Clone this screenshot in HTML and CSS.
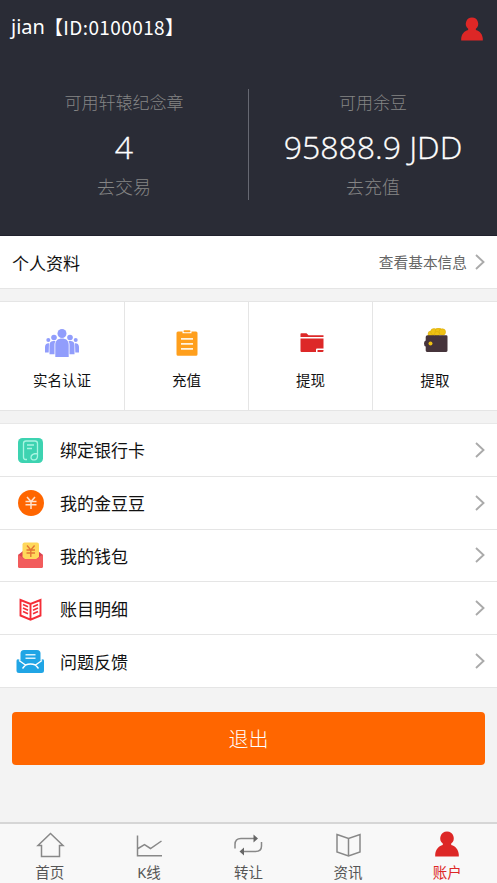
FILE: index.html
```html
<!DOCTYPE html>
<html lang="zh-CN">
<head>
<meta charset="utf-8">
<meta name="viewport" content="width=device-width, initial-scale=1">
<title>账户</title>
<link rel="stylesheet" href="styles.css">
</head>
<body>
<svg class="defs" aria-hidden="true">
  <symbol id="person" viewBox="0 0 24 26"><path d="M12 0.500a6.800 6.800 0 0 1 4.200 12.100v1.400c4.500 1.200 7.300 4.800 7.600 9.600v1.900H.2v-1.900c.3-4.800 3.100-8.400 7.600-9.600v-1.400A6.800 6.800 0 0 1 12 .5z" fill="#dd2726"/></symbol>
  <symbol id="chevron" viewBox="0 0 10 16"><path d="M1 1l7.500 7L1 15" fill="none" stroke="#aaa" stroke-width="1.900"/></symbol>
</svg>
<header class="hero">
  <div class="topbar">
    <h1 class="user"><span>jian</span><span class="user-id">【ID:0100018】</span></h1>
    <svg class="avatar"><use href="#person"/></svg>
  </div>
  <div class="balances">
    <div class="balance"><span class="caption">可用轩辕纪念章</span><strong>4</strong><a>去交易</a></div>
    <div class="balance"><span class="caption">可用余豆</span><strong>95888.9 JDD</strong><a>去充值</a></div>
  </div>
</header>
<main>
  <section class="profile"><span>个人资料</span><span class="more">查看基本信息</span><svg class="chevron"><use href="#chevron"/></svg></section>
  <section class="actions">
    <div class="action">
      <svg viewBox="0 0 36 30"><g fill="#919dfc"><circle cx="18" cy="5.500" r="4.500"/><circle cx="10" cy="9.500" r="2.800"/><circle cx="26" cy="9.500" r="2.800"/><circle cx="4.300" cy="12" r="2"/><circle cx="31.700" cy="12" r="2"/><path d="M11.300 29V17c0-4.500 2.700-6.500 6.700-6.500s6.700 2 6.700 6.500v12zM10.500 26.200H5.500V17c0-3 2-4.500 6-3.800-.8 1.200-1 2.400-1 4zM25.500 26.200h5V17c0-3-2-4.500-6-3.800.8 1.200 1 2.400 1 4zM4.700 24.500H1V19c0-2.500 1.500-4 4-3.800zM31.300 24.500H35V19c0-2.500-1.500-4-4-3.800z"/></g></svg>
      <span>实名认证</span>
    </div>
    <div class="action">
      <svg viewBox="0 0 36 30"><path d="M9 3.500h4.500v1.800h9V3.500H27a1.500 1.500 0 0 1 1.500 1.500v21.200a1.500 1.500 0 0 1-1.500 1.500H9a1.500 1.500 0 0 1-1.500-1.500V5A1.500 1.500 0 0 1 9 3.500z" fill="#ff9f1c"/><rect x="14.500" y="2.300" width="7" height="2" rx="1" fill="#ff9f1c"/><path d="M12 10.900h12M12 15.900h12M12 20.900h12" stroke="#fff3df" stroke-width="1.800"/></svg>
      <span>充值</span>
    </div>
    <div class="action">
      <svg viewBox="0 0 36 30"><path d="M7.500 9V6q0-.8.800-.8h5.200L15.500 7.200h15V9zM7.500 10.500h23v9.900H24q-1 0-1 1v2.500H8.500q-1 0-1-1zM24.500 22h6v.9q0 1-1 1h-5z" fill="#dd2828"/></svg>
      <span>提现</span>
    </div>
    <div class="action">
      <svg viewBox="0 0 36 30"><g fill="#efc114" stroke="#d6a905" stroke-width=".5"><circle cx="14" cy="6" r="3"/><circle cx="17" cy="3.800" r="3.300"/><circle cx="21.500" cy="3.300" r="3.300"/><circle cx="25.300" cy="4" r="3.300"/><circle cx="20" cy="6" r="2.500"/></g><path d="M10.500 7.300h18.700q1.300 0 1.300 1.300v14q0 1.300-1.300 1.300H10q-1.300 0-1.300-1.300v-4q-1.700-.5-1.700-3t1.700-3V9q0-1.700 1.800-1.700z" fill="#46343b"/><circle cx="13.500" cy="15.500" r="2" fill="#efc114"/></svg>
      <span>提取</span>
    </div>
  </section>
  <section class="menu">
    <div class="row">
      <svg class="icon" viewBox="0 0 30 30"><rect x="3" y="3" width="25" height="25" rx="4.500" fill="#3dd3b1"/><path d="M12 24.500H10.500Q8.500 24.500 8.500 22V8.500q0-2.500 2.500-2.500h9q2.500 0 2.500 2.500V21c0 5-6.500 5-6.500 1.500 0-2.500 2.500-4 6.500-4M12 10h7M12 13.500h5" fill="none" stroke="#a9f5e2" stroke-width="1.300"/></svg>
      <span>绑定银行卡</span><svg class="chevron"><use href="#chevron"/></svg>
    </div>
    <div class="row">
      <svg class="icon" viewBox="0 0 30 30"><circle cx="16" cy="15" r="13" fill="#f60"/><path d="M12 9l4 4.500L20 9M10.500 13.500h11M10.500 16.800h11M16 13.500v7.500" fill="none" stroke="#ffe2cb" stroke-width="1.500"/></svg>
      <span>我的金豆豆</span><svg class="chevron"><use href="#chevron"/></svg>
    </div>
    <div class="row">
      <svg class="icon" viewBox="0 0 30 30"><path d="M3 15l5-4h15l5 4v11q0 2-2 2H5q-2 0-2-2z" fill="#d84351"/><path d="M9.500 2.500h12.500q2 0 2 2V17l-3 3H10.500l-3-3V4.500q0-2 2-2z" fill="#ffd85b"/><path d="M12 5.500l3.800 4.500 3.800-4.500M11.500 10h8.500M11.500 13h8.500M15.800 10v7" fill="none" stroke="#e37535" stroke-width="1.400"/><path d="M3 14.500l7 4.500h11l7-4.500V26q0 2-2 2H5q-2 0-2-2z" fill="#f25c5c"/></svg>
      <span>我的钱包</span><svg class="chevron"><use href="#chevron"/></svg>
    </div>
    <div class="row">
      <svg class="icon" viewBox="0 0 30 30"><path d="M5.500 7L15.500 11l10-4v15.500l-10 4.200-10-4.200zM15.500 11v15" fill="none" stroke="#f52d37" stroke-width="1.900"/><path d="M8 11.500l5 2.200M8 15l5 2.200M8 18.500l5 2.200M23 11.500l-5 2.200M23 15l-5 2.200M23 18.500l-5 2.200" stroke="#f52d37" stroke-width="1.600"/></svg>
      <span>账目明细</span><svg class="chevron"><use href="#chevron"/></svg>
    </div>
    <div class="row">
      <svg class="icon" viewBox="0 0 30 30"><path d="M5.500 17V7.500Q5.500 4 9 4h13q3.500 0 3.500 3.500V17l-5 3.500h-10z" fill="#20a5e5"/><path d="M10.500 8.800h10M10.500 12.300h10" stroke="#d8f1fd" stroke-width="1.600"/><path d="M1.500 15q0-2.500 2.500-1.500l7 5h9l7-5q2-1 2 1.500v9.500q0 2.500-2.500 2.500H4q-2.500 0-2.500-2.500z" fill="#20a5e5"/><path d="M4 14.500l6.500 4.500q5 -2 10 0l6.500-4.500M10.500 19L7.500 22.500M20.500 19l3 3.500" fill="none" stroke="#fff" stroke-width="1.400"/></svg>
      <span>问题反馈</span><svg class="chevron"><use href="#chevron"/></svg>
    </div>
  </section>
  <button class="logout" type="button">退出</button>
</main>
<nav class="tabs">
  <a class="tab"><svg viewBox="0 0 30 28"><path d="M6.500 14.500H3L15.500 2.500 28 14.500h-3.500v11h-18z"/></svg><span>首页</span></a>
  <a class="tab"><svg viewBox="0 0 30 28"><path d="M3.500 4.500v20.300H28M4 17.500l6.500-3.800 6 3.800L27.500 10"/></svg><span>K线</span></a>
  <a class="tab"><svg viewBox="0 0 30 28"><path d="M2 17.500v-4Q2 7.500 8 7.500h15M28.500 11v4q0 5.500-6 5.500H8"/><path class="arrow" d="M20.500 3.500l4.500 4-4.500 4zM11 16.500l-4.500 4 4.500 4z"/></svg><span>转让</span></a>
  <a class="tab"><svg viewBox="0 0 30 28"><path d="M4 3.500l11.500 4L27 3.500v17.500l-11.500 4L4 21zM15.500 7.500v17.500"/></svg><span>资讯</span></a>
  <a class="tab active"><svg class="person"><use href="#person"/></svg><span>账户</span></a>
</nav>
</body>
</html>
```
FILE: styles.css
```css
* { box-sizing: border-box; }
body {
  margin: 0;
  height: 883px;
  display: flex;
  flex-direction: column;
  overflow: hidden;
  background: #f3f3f3;
  color: #111;
  font-family: "Noto Sans", "Noto Sans CJK SC", sans-serif;
  font-size: 17px;
  font-weight: 400;
}
.defs { position: absolute; width: 0; height: 0; }
main { flex: 1; }

.hero { height: 236px; background: #2a2c36; border-bottom: 1px solid #20212d; color: #fff; }
.topbar { height: 54px; padding: 0 14px 0 11px; display: flex; align-items: center; justify-content: space-between; }
.user { margin: 0; display: flex; font-size: 20px; font-weight: 400; line-height: 28px; }
.user-id { font-family: "Noto Sans CJK SC", sans-serif; font-size: 19px; letter-spacing: .4px; margin-left: -1px; }
.avatar { width: 22px; height: 24px; margin-top: 4px; }
.balances { display: flex; height: 111px; margin-top: 35px; }
.balance { width: 248px; display: flex; flex-direction: column; align-items: center; color: #858585; line-height: 26px; font-family: "Noto Sans CJK SC", sans-serif; font-weight: 300; }
.balance:first-child { width: 249px; border-right: 1px solid #666872; }
.balance strong { color: #fff; font-family: "Open Sans", "Noto Sans", sans-serif; font-size: 32px; font-weight: 300; line-height: 40px; margin: 12px 0 6px; white-space: nowrap; -webkit-text-stroke: .3px #fff; }
.balance a { font-size: 18px; }

.profile { height: 53px; padding: 0 12px 0 12px; display: flex; align-items: center; background: #fff; border-bottom: 1px solid #e5e5e5; }
.more { margin-left: auto; margin-right: 8px; color: #666; font-size: 14.700px; margin-top: -2px; }
.chevron { width: 10px; height: 16px; flex: none; }

.actions { height: 110px; margin-top: 12px; display: grid; grid-template-columns: 125px 124px 124px 1fr; background: #fff; border: solid #e5e5e5; border-width: 1px 0; }
.action { display: flex; flex-direction: column; align-items: center; padding-top: 26px; font-size: 14.500px; line-height: 22px; }
.action { border-right: 1px solid #e5e5e5; }
.action:last-child { border-right: 0; }
.action svg { width: 36px; height: 30px; margin-bottom: 11px; }

.menu { margin-top: 12px; border-top: 1px solid #e8e8e8; background: #fff; }
.row { height: 52.800px; display: flex; align-items: center; padding: 0 12px 0 15px; border-bottom: 1px solid #e5e5e5; }
.row .icon { width: 30px; height: 30px; margin-right: 15px; }
.row .chevron { margin-left: auto; }

.logout { display: block; width: 473px; height: 53px; margin: 24px 12px 0; padding: 0; border: 0; border-radius: 4px; background: #f60; color: #fff; font: 300 20px "Noto Sans CJK SC", sans-serif; }

.tabs { height: 61px; display: grid; grid-template-columns: repeat(5, 1fr); background: #f8f8f8; border-top: 2px solid #d6d6d6; }
.tab { display: flex; flex-direction: column; align-items: center; padding-top: 7px; color: #555; font-size: 14.500px; line-height: 22px; }
.tab svg { width: 30px; height: 28px; margin-bottom: 2px; fill: none; stroke: #888; stroke-width: 1.500; }
.tab .arrow { fill: #666; stroke: none; }
.tab .person { width: 26px; height: 26px; margin: 0 0 4px; stroke: none; }
.tab.active { color: #dd2726; }
```
